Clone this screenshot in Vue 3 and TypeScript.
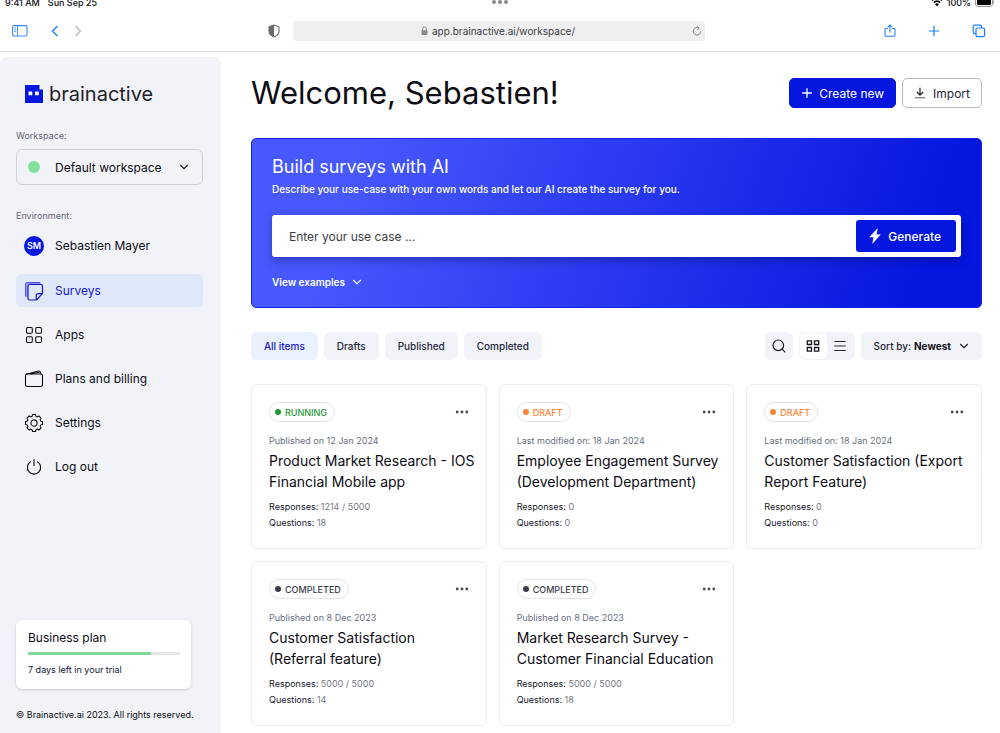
<script setup lang="ts">
import { ref } from 'vue'

type Status = 'running' | 'draft' | 'completed'

interface Survey {
  status: Status
  dateLabel: string
  date: string
  title: string
  responses: string
  questions: number
}

const surveys: Survey[] = [
  { status: 'running', dateLabel: 'Published on', date: '12 Jan 2024', title: 'Product Market Research - IOS Financial Mobile app', responses: '1214 / 5000', questions: 18 },
  { status: 'draft', dateLabel: 'Last modified on:', date: '18 Jan 2024', title: 'Employee Engagement Survey (Development Department)', responses: '0', questions: 0 },
  { status: 'draft', dateLabel: 'Last modified on:', date: '18 Jan 2024', title: 'Customer Satisfaction (Export Report Feature)', responses: '0', questions: 0 },
  { status: 'completed', dateLabel: 'Published on', date: '8 Dec 2023', title: 'Customer Satisfaction (Referral\u00a0feature)', responses: '5000 / 5000', questions: 14 },
  { status: 'completed', dateLabel: 'Published on', date: '8 Dec 2023', title: 'Market Research Survey - Customer Financial Education', responses: '5000 / 5000', questions: 18 },
]

const navItems = ['Surveys', 'Apps', 'Plans and billing', 'Settings', 'Log out']
const filters = ['All items', 'Drafts', 'Published', 'Completed']
const activeFilter = ref('All items')
const view = ref<'grid' | 'list'>('grid')
const useCase = ref('')
const address = ref('app.brainactive.ai/workspace/')
const examplesOpen = ref(false)
const trialUsed = 81

// Outline of an eight-toothed cog centred in a 20 unit box.
function cogPath(): string {
  const at = (deg: number, r: number): string => {
    const a = (deg * Math.PI) / 180
    return `${(10 + r * Math.cos(a)).toFixed(2)} ${(10 + r * Math.sin(a)).toFixed(2)}`
  }
  let d = `M${at(-10, 8.6)}`
  for (let i = 0; i < 8; i++) {
    const c = i * 45
    d += ` L${at(c + 10, 8.6)} Q${at(c + 14, 6.6)} ${at(c + 22.5, 6.9)} Q${at(c + 31, 6.6)} ${at(c + 35, 8.6)}`
  }
  return d + 'Z'
}
const cog = cogPath()
</script>

<template>
  <div class="app">
    <header class="browser">
      <div class="status">
        <span class="clock"><span>9:41 AM</span><span>Sun Sep 25</span></span>
        <svg class="dots" viewBox="0 0 16 6" width="16" height="6"><circle cx="2" cy="3" r="2" /><circle cx="8" cy="3" r="2" /><circle cx="14" cy="3" r="2" /></svg>
        <span class="power">
          <svg width="12" height="10" viewBox="0 0 12 10"><path d="M1 3.5Q6-1 11 3.5M2.9 5.6Q6 2.7 9.1 5.6" fill="none" stroke="#000" stroke-width="1.6" /><path d="M4 7.2Q6 5.5 8 7.2L6 9.2Z" fill="#000" /></svg>
          <span>100%</span>
          <svg width="20" height="10" viewBox="0 0 20 10"><rect x=".5" y=".5" width="17" height="9" rx="2.5" fill="#fff" stroke="#999" /><rect x="2" y="1" width="14" height="7" rx="1.5" fill="#000" /><path d="M18.7 3.5v3" stroke="#999" /></svg>
        </span>
      </div>
      <div class="toolbar">
        <div class="tools-left">
          <button class="icon-btn" aria-label="Show sidebar"><svg width="16" height="12" viewBox="0 0 16 12" fill="none" stroke="#3b87f7"><rect x=".6" y=".6" width="14.4" height="10.4" rx="1.6" stroke-width="1.1" /><path d="M5.6 1v10" /><path d="M2.2 3h2M2.2 4.8h2M2.2 6.6h2" stroke-width=".8" /></svg></button>
          <button class="icon-btn" aria-label="Back"><svg width="8" height="12" viewBox="0 0 8 12"><path d="M6.5 1 1.5 6l5 5" fill="none" stroke="#1a7cf8" stroke-width="1.3" /></svg></button>
          <button class="icon-btn" aria-label="Forward"><svg width="8" height="12" viewBox="0 0 8 12"><path d="m1.5 1 5 5-5 5" fill="none" stroke="#b5b5b8" stroke-width="1.3" /></svg></button>
        </div>
        <button class="icon-btn shield" aria-label="Privacy report"><svg width="12" height="14" viewBox="0 0 12 14"><path d="M6 1 1 2.8v5Q1.2 11 6 13 10.8 11 11 7.8v-5Z" fill="#fff" stroke="#6b6b6d" stroke-width="1.1" /><path d="M6 1 1 2.8v5Q1.2 11 6 13Z" fill="#6b6b6d" /></svg></button>
        <div class="address">
          <svg class="lock" width="7" height="10" viewBox="0 0 7 10"><path d="M1.7 5V2.8a1.8 1.8 0 0 1 3.6 0V5" fill="none" stroke="#8a8a8c" /><rect x=".5" y="4.2" width="6" height="4.8" rx=".8" fill="#8a8a8c" /></svg>
          <input v-model="address" aria-label="Address" type="text" />
          <button class="icon-btn reload" aria-label="Reload"><svg width="10" height="10" viewBox="0 0 10 10" fill="none" stroke="#77777a" stroke-width=".9"><path d="M7 2.2A3.7 3.7 0 1 0 8.7 5.3M4.900.5 7.200 2.200 5.400 4" /></svg></button>
        </div>
        <div class="tools-right">
          <button class="icon-btn" aria-label="Share"><svg width="12" height="14" viewBox="0 0 12 14" fill="none" stroke="#2b83f7" stroke-width="1.1"><path d="M4 4.500H2q-1 0-1 1V11q0 1.300 1.300 1.300h7.400Q11 12.300 11 11V5.500q0-1-1-1H8M6 8.500V1.200M3.800 3.200 6 1l2.200 2.200" /></svg></button>
          <button class="icon-btn" aria-label="New tab"><svg width="12" height="12" viewBox="0 0 12 12"><path d="M6 .8v10.400M.8 6h10.400" stroke="#1a7cf8" stroke-width="1.2" /></svg></button>
          <button class="icon-btn" aria-label="Show tabs"><svg width="14" height="14" viewBox="0 0 14 14" fill="none" stroke="#1a7cf8" stroke-width="1.2"><rect x="4" y="4" width="8.6" height="8.6" rx="1.6" /><path d="M4 9.600H2.800Q1.200 9.600 1.200 8V2.800Q1.200 1.200 2.800 1.200H8Q9.600 1.200 9.600 2.800V4" /></svg></button>
        </div>
      </div>
    </header>

    <div class="page">
      <aside class="sidebar">
        <a class="logo" href="#">
          <svg width="18" height="18" viewBox="0 0 18 18"><path d="M0 0h14.500v4.500H18V18H0Z" fill="#0516de" /><path d="M3.500 6.500h3.800v3.800H3.500zM10 6.500h3.800v3.800H10z" fill="#fff" /></svg>
          <span>brainactive</span>
        </a>
        <label class="caption" for="workspace">Workspace:</label>
        <div class="workspace">
          <span class="dot"></span>
          <select id="workspace"><option>Default workspace</option></select>
          <svg class="chevron" width="10" height="6" viewBox="0 0 10 6"><path d="m1.200 1 3.800 3.700L8.800 1" /></svg>
        </div>
        <p class="caption">Environment:</p>
        <a class="item profile" href="#"><span class="avatar">SM</span><span>Sebastien Mayer</span></a>
        <nav aria-label="Main">
          <a v-for="item in navItems" :key="item" class="item" :class="{ active: item === 'Surveys' }" href="#">
            <svg v-if="item === 'Surveys'" width="20" height="20" viewBox="0 0 20 20" fill="none" stroke="currentColor"><path d="M1.500 15.500V3Q1.500 1.500 3 1.500H16" opacity=".7" /><path d="M2.800 16V4Q2.800 2.500 4.500 2.500H17" opacity=".4" stroke-width="1.6" /><path d="M4 5.200Q4 3.500 5.700 3.500H17q1.500 0 1.500 1.500v7.500l-6 6.500H5.500Q4 19 4 17.500ZM12.200 19v-4.300q0-2 2-2h4.300" stroke-width="1.2" /></svg>
            <svg v-else-if="item === 'Apps'" width="20" height="20" viewBox="0 0 20 20" fill="none" stroke="currentColor" stroke-width="1.1"><rect x="2.500" y="2.500" width="5.800" height="5.800" rx="1.2" /><rect x="11.700" y="2.500" width="5.800" height="5.800" rx="1.2" /><rect x="2.500" y="11.700" width="5.800" height="5.800" rx="1.2" /><rect x="11.700" y="11.700" width="5.800" height="5.800" rx="1.2" /></svg>
            <svg v-else-if="item === 'Plans and billing'" width="20" height="20" viewBox="0 0 20 20" fill="none" stroke="currentColor" stroke-width="1.1"><rect x="1.500" y="5" width="17" height="12.500" rx="1.7" /><path d="M2 5.300 14.500 2q1.500-.3 1.800 1.200l.4 1.800M6.500 5l9-1.700" /></svg>
            <svg v-else-if="item === 'Settings'" width="20" height="20" viewBox="0 0 20 20" fill="none" stroke="currentColor" stroke-width="1.1" stroke-linejoin="round"><path :d="cog" /><circle cx="10" cy="10" r="3.1" /></svg>
            <svg v-else width="20" height="20" viewBox="0 0 20 20" fill="none" stroke="currentColor" stroke-width="1.1" stroke-linecap="round"><path d="M10 2.500v6M6.500 4.900a6.600 6.600 0 1 0 7 0" /></svg>
            <span>{{ item }}</span>
          </a>
        </nav>
        <section class="plan">
          <h2>Business plan</h2>
          <div class="track" role="progressbar" aria-label="Trial used" :aria-valuenow="trialUsed"><div class="fill" :style="{ width: trialUsed + '%' }"></div></div>
          <p>7 days left in your trial</p>
        </section>
        <footer>© Brainactive.ai 2023. All rights reserved.</footer>
      </aside>

      <main>
        <div class="heading">
          <h1>Welcome, Sebastien!</h1>
          <button class="btn primary"><svg width="12" height="12" viewBox="0 0 12 12"><path d="M6 1.200v9.600M1.200 6h9.600" stroke="#fff" stroke-width="1.3" /></svg><span>Create new</span></button>
          <button class="btn outline"><svg width="12" height="12" viewBox="0 0 12 12" fill="none" stroke="#222"><path d="M6 .8v7M2.800 5 6 8.200 9.200 5" stroke-width="1.2" /><path d="M1 10.800h10" stroke="#555" /></svg><span>Import</span></button>
        </div>

        <section class="banner">
          <h2>Build surveys with AI</h2>
          <p>Describe your use-case with your own words and let our AI create the survey for you.</p>
          <form class="prompt" @submit.prevent>
            <input v-model="useCase" type="text" aria-label="Use case" placeholder="Enter your use case ..." />
            <button class="generate" type="submit"><svg width="12" height="16" viewBox="0 0 12 16"><path d="M8.300.8.800 9h4L3.700 15.200 11.200 6.700H7.300Z" fill="#fff" stroke="#fff" stroke-width=".6" stroke-linejoin="round" /></svg><span>Generate</span></button>
          </form>
          <button class="examples" :aria-expanded="examplesOpen" @click="examplesOpen = !examplesOpen"><span>View examples</span><svg class="chevron light" width="10" height="6" viewBox="0 0 10 6"><path d="m1.200 1 3.800 3.700L8.800 1" /></svg></button>
        </section>

        <div class="controls">
          <button v-for="f in filters" :key="f" class="chip" :class="{ on: f === activeFilter }" @click="activeFilter = f">{{ f }}</button>
          <span class="spacer"></span>
          <button class="chip square" aria-label="Search"><svg width="16" height="16" viewBox="0 0 16 16" fill="none" stroke="#1c1c28" stroke-width="1.2"><circle cx="7.300" cy="7.300" r="5.300" /><path d="m11.200 11.200 3.100 3.100" /></svg></button>
          <div class="toggle">
            <button :class="{ on: view === 'grid' }" aria-label="Grid view" @click="view = 'grid'"><svg width="14" height="14" viewBox="0 0 14 14" fill="none" stroke="#15151c" stroke-width="1.3"><path d="M1.300 1.800h4.200v3.700H1.300zM8.500 1.800h4.200v3.700H8.500zM1.300 8.500h4.200v3.700H1.300zM8.500 8.500h4.200v3.700H8.500z" /></svg></button>
            <button :class="{ on: view === 'list' }" aria-label="List view" @click="view = 'list'"><svg width="14" height="14" viewBox="0 0 14 14" stroke="#2a2a36" stroke-width="1.1"><path d="M1.300 2.500h11.400M1.300 7h11.400M1.300 11.500h11.400" /></svg></button>
          </div>
          <div class="chip sort">
            <label for="sort">Sort by:</label>
            <select id="sort"><option>Newest</option><option>Oldest</option></select>
            <svg class="chevron" width="10" height="6" viewBox="0 0 10 6"><path d="m1.200 1 3.800 3.700L8.800 1" /></svg>
          </div>
        </div>

        <div class="cards">
          <article v-for="s in surveys" :key="s.title" class="card">
            <div class="card-top">
              <span class="badge" :class="s.status">{{ s.status.toUpperCase() }}</span>
              <button class="icon-btn" aria-label="More actions"><svg width="14" height="4" viewBox="0 0 14 4" fill="#4a4a50"><circle cx="2.200" cy="2" r="1.4" /><circle cx="7" cy="2" r="1.4" /><circle cx="11.800" cy="2" r="1.4" /></svg></button>
            </div>
            <p class="date">{{ s.dateLabel }} {{ s.date }}</p>
            <h3>{{ s.title }}</h3>
            <p class="stat">Responses: <span>{{ s.responses }}</span></p>
            <p class="stat">Questions: <span>{{ s.questions }}</span></p>
          </article>
        </div>
      </main>
    </div>
  </div>
</template>

<style>
body {
  margin: 0;
  background: #fff;
}
</style>

<style scoped>
* {
  box-sizing: border-box;
}
.app {
  min-height: 100vh;
  display: flex;
  flex-direction: column;
  font-family: Inter, 'Liberation Sans', sans-serif;
  font-size: 12px;
  color: #0c0c14;
}
h1, h2, h3, p {
  margin: 0;
  font-weight: 400;
}
button, input, select {
  font: inherit;
  color: inherit;
  border: 0;
  padding: 0;
  background: none;
}
select {
  appearance: none;
}
a {
  color: inherit;
  text-decoration: none;
}
svg {
  flex: none;
  display: block;
}
.icon-btn {
  display: flex;
  align-items: center;
  justify-content: center;
}
.chevron {
  fill: none;
  stroke: #1c1c28;
  stroke-width: 1.2;
  pointer-events: none;
}
.chevron.light {
  stroke: #fff;
}

.browser {
  height: 52px;
  overflow: hidden;
  border-bottom: 1px solid #e2e2e3;
}
.status {
  display: grid;
  grid-template-columns: 1fr auto 1fr;
  align-items: center;
  height: 16px;
  margin-top: -6px;
  padding: 0 5px;
  font-size: 9px;
  font-weight: 500;
}
.clock, .power {
  display: flex;
  gap: 8px;
}
.power {
  justify-content: flex-end;
  align-items: center;
  gap: 4px;
}
.dots {
  fill: #8a8a8c;
}
.toolbar {
  display: grid;
  grid-template-columns: 268px 12px minmax(0, 412px) 1fr;
  align-items: center;
  height: 42px;
  padding: 0 14px 0 0;
}
.tools-left {
  display: flex;
  align-items: center;
  gap: 15px;
  padding-left: 12px;
}
.tools-left .icon-btn:first-child {
  margin-right: 8px;
}
.address {
  display: flex;
  align-items: center;
  justify-content: center;
  gap: 4px;
  height: 20px;
  margin-left: 13px;
  margin-right: -13px;
  padding-right: 3px;
  border-radius: 4px;
  background: #efeff0;
}
.lock {
  margin-left: auto;
}
.address input {
  width: 144px;
  font-size: 10px;
  color: #3c3c3e;
}
.reload {
  margin-left: auto;
  flex: none;
}
.address::before {
  content: '';
  width: 12px;
}
.tools-right {
  display: flex;
  justify-content: flex-end;
  align-items: center;
  gap: 32px;
}

.page {
  flex: 1;
  display: flex;
  padding-top: 5px;
}
.sidebar {
  flex: none;
  width: 221px;
  display: flex;
  flex-direction: column;
  padding: 24px 18px 12px 16px;
  border-radius: 8px 8px 0 0;
  background: #f2f3f8;
}
.logo {
  display: flex;
  align-items: center;
  gap: 6px;
  height: 26px;
  padding-left: 9px;
  font-size: 20px;
  color: #22222a;
}
.caption {
  font-size: 9px;
  line-height: 12px;
  color: #5f6673;
}
.logo + .caption {
  margin-top: 23px;
}
.workspace {
  display: flex;
  align-items: center;
  height: 36px;
  margin: 7px 0 25px;
  padding: 0 13px 0 11px;
  border: 1px solid #cfd1d7;
  border-radius: 6px;
}
.dot {
  flex: none;
  width: 12px;
  height: 12px;
  border-radius: 50%;
  background: #84e19b;
}
.workspace select {
  flex: 1;
  margin-left: 15px;
}
.item {
  display: flex;
  align-items: center;
  gap: 11px;
  height: 33px;
  padding: 0 8px;
  border-radius: 6px;
}
.profile {
  margin: 7px 0 12px;
}
.avatar {
  display: flex;
  align-items: center;
  justify-content: center;
  width: 20px;
  height: 20px;
  border-radius: 50%;
  background: #0516de;
  color: #fff;
  font-size: 9px;
  font-weight: 600;
}
nav {
  display: flex;
  flex-direction: column;
  gap: 11px;
}
.item.active {
  background: #dfe8f8;
  color: #1717d4;
}
.plan {
  margin: auto 12px 0 0;
  padding: 10px 11px 13px 12px;
  border-radius: 6px;
  background: #fff;
  box-shadow: 0 1px 3px rgba(20, 30, 60, 0.18);
}
.plan h2 {
  font-size: 12px;
  line-height: 15px;
}
.plan p {
  font-size: 9px;
  line-height: 12px;
  color: #10152e;
}
.track {
  height: 3px;
  margin: 7px 0 9px;
  background: #e6e6e8;
}
.fill {
  height: 100%;
  background: #7fdc98;
}
footer {
  margin-top: 20px;
  font-size: 9px;
  line-height: 12px;
  white-space: nowrap;
}

main {
  flex: 1;
  min-width: 0;
  padding: 16px 18px 7px 30px;
}
.heading {
  display: flex;
  align-items: center;
  gap: 6px;
  height: 40px;
  margin-bottom: 25px;
}
h1 {
  flex: 1;
  font-size: 31px;
  line-height: 40px;
  white-space: nowrap;
}
.btn {
  display: flex;
  align-items: center;
  gap: 7px;
  height: 30px;
  padding: 0 11px;
  border: 1px solid #b9bac0;
  border-radius: 5px;
}
.btn.primary {
  gap: 6px;
  border-color: #0516de;
  background: #0516de;
  color: #fff;
}
.btn.outline {
  color: #22263a;
}
.banner {
  padding: 17px 20px;
  border: 1px solid #1524e4;
  border-radius: 5px;
  background: linear-gradient(108deg, #4758ff 14%, #0516de 92%);
  color: #fff;
}
.banner h2 {
  font-size: 18px;
  line-height: 22px;
}
.banner p {
  margin-top: 3px;
  font-size: 10px;
  font-weight: 500;
  line-height: 16px;
}
.prompt {
  display: flex;
  align-items: center;
  height: 42px;
  margin: 18px 0 17px;
  padding: 0 5px 0 17px;
  border-radius: 3px;
  background: #fff;
  box-shadow: 0 4px 10px rgba(10, 15, 80, 0.35);
}
.prompt input {
  flex: 1;
  min-width: 0;
  height: 30px;
  color: #333;
  outline: 0;
}
.prompt input::placeholder {
  color: #3c3c42;
  opacity: 1;
}
.generate {
  display: flex;
  align-items: center;
  gap: 7px;
  height: 32px;
  padding: 0 15px 0 13px;
  border-radius: 3px;
  background: #0516de;
  color: #fff;
  font-weight: 500;
}
.examples {
  display: flex;
  align-items: center;
  gap: 7px;
  height: 16px;
  font-size: 10px;
  font-weight: 600;
}

.controls {
  display: flex;
  align-items: center;
  gap: 6px;
  margin: 24px 0;
  font-size: 10px;
  font-weight: 500;
}
.chip {
  display: flex;
  align-items: center;
  justify-content: center;
  height: 28px;
  padding: 0 13px;
  border-radius: 6px;
  background: #f2f3f8;
  color: #22263a;
}
.chip.on {
  background: #e9f1ff;
  color: #1717d4;
}
.spacer {
  flex: 1;
}
.square {
  width: 28px;
  padding: 0;
}
.toggle {
  display: flex;
  height: 28px;
  padding: 1px;
  border-radius: 6px;
  background: #f2f3f8;
}
.toggle button {
  display: flex;
  align-items: center;
  justify-content: center;
  width: 27px;
  border-radius: 6px;
}
.toggle .on {
  background: #fff;
}
.sort {
  gap: 3px;
}
.sort select {
  font-weight: 700;
  color: #15151c;
}
.sort .chevron {
  margin-left: 4px;
}

.cards {
  display: grid;
  grid-template-columns: repeat(3, minmax(0, 1fr));
  gap: 12px;
}
.card {
  min-width: 0;
  padding: 17px 8px 17px 17px;
  border: 1px solid #eaebee;
  border-radius: 6px;
}
.card-top {
  display: flex;
  align-items: center;
  justify-content: space-between;
  padding-right: 9px;
}
.badge {
  display: flex;
  align-items: center;
  gap: 4px;
  height: 20px;
  padding: 0 7px 0 5px;
  border: 1px solid #e2e4e8;
  border-radius: 10px;
  font-size: 9px;
  font-weight: 500;
}
.badge::before {
  content: '';
  width: 6px;
  height: 6px;
  border-radius: 50%;
  background: currentColor;
}
.running {
  color: #1c9a33;
}
.draft {
  color: #f98634;
}
.completed {
  color: #3a3d49;
}
.date {
  margin-top: 12px;
  font-size: 9px;
  line-height: 14px;
  color: #687080;
}
.card h3 {
  margin: 2px 0 7px;
  font-size: 14px;
  line-height: 21px;
}
.stat {
  font-size: 9px;
  line-height: 16px;
  color: #15171f;
}
.stat span {
  color: #737985;
}
</style>
